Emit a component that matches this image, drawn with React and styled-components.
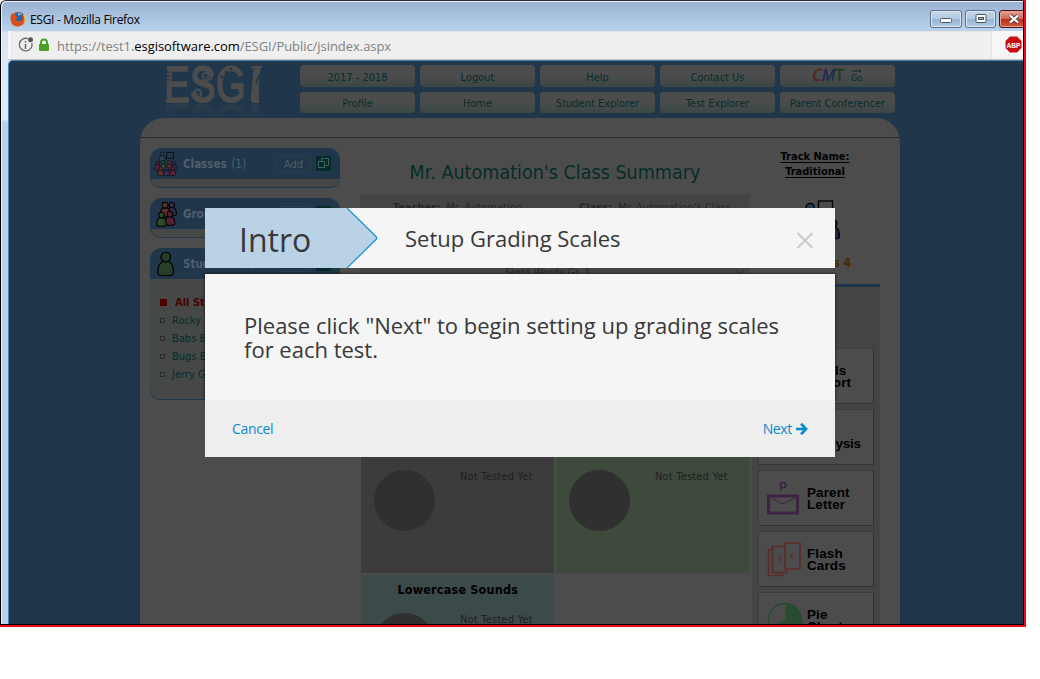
import React from "react";
import styled, { createGlobalStyle, css } from "styled-components";

const tahoma = `"DejaVu Sans Condensed", "DejaVu Sans", Tahoma, sans-serif`;
const openSans = `"Open Sans", "Noto Sans", sans-serif`;

const Global = createGlobalStyle`
  *, *::before, *::after { box-sizing: border-box; }
  html, body { margin: 0; background: #fff; }
  body { font-family: ${tahoma}; }
  svg { display: block; }
`;

const Screen = styled.div`
  width: 1026px;
  height: 627px;
  overflow: hidden;
  border-right: 2px solid #ee0a1e;
  border-bottom: 2px solid #ee0a1e;
`;
const Frame = styled.div`
  height: 625px;
  display: flex;
  flex-direction: column;
  border: 1px solid #000;
  border-top: 1px solid #2b2830;
  border-radius: 6px 0 0 0;
  background: linear-gradient(#98b2d1 0, #b9d1ea 30px, #d9e5f4 31px, #e2ecf8 118px, #b9d1ea 121px);
  box-shadow: inset 1px 1px 0 #e9f1fa;
  overflow: hidden;
`;
const TitleBar = styled.div`
  height: 30px;
  flex: none;
  display: flex;
  align-items: center;
  padding: 6px 0 0 9px;
  gap: 4px;
`;
const WindowTitle = styled.div`
  flex: 1;
  font: 12px/18px ${openSans};
  letter-spacing: -0.3px;
  padding-top: 2px;
  color: #000;
`;
const WindowButtons = styled.div`
  display: flex;
  gap: 3px;
  width: 93px;
  overflow: hidden;
  padding-bottom: 1px;
`;
const WindowButton = styled.div`
  width: ${(p) => p.$w}px;
  height: 18px;
  flex: none;
  display: flex;
  align-items: center;
  justify-content: center;
  padding-right: ${(p) => (p.$close ? 2 : 0)}px;
  border: 1px solid ${(p) => (p.$close ? "#4b1119" : "#5e7188")};
  border-radius: 3px;
  box-shadow: inset 0 0 0 1px ${(p) => (p.$close ? "#e9a294" : "#dce8f5")};
  background: ${(p) =>
    p.$close
      ? "linear-gradient(#e4a394, #cf6752 49%, #b8301d 50%, #cf5a3a)"
      : "linear-gradient(#c5d7ea, #b3c9e0 49%, #98b3d0 50%, #b3cbe3)"};
`;
const UrlBar = styled.div`
  height: 29px;
  flex: none;
  margin-left: 7px;
  display: flex;
  align-items: center;
  background: #f6f6f6;
  padding-left: 3px;
  border-bottom: 1px solid #c4c4c4;
`;
const UrlField = styled.div`
  width: 981px;
  height: 28px;
  display: flex;
  align-items: center;
  padding: 0 0 1px 6px;
  background: #efefef;
  border: solid #e3e3e3;
  border-width: 1px 1px 0;
`;
const Url = styled.div`
  font: 13px/20px ${openSans};
  color: #818181;
  margin: 1px 0 0 8px;
  letter-spacing: -0.05px;
  b { font-weight: 400; color: #000; }
`;
const Adblock = styled.div`
  padding: 0 0 2px 13px;
`;
const Viewport = styled.div`
  position: relative;
  flex: 1;
  min-height: 0;
  overflow: hidden;
  margin-left: 7px;
  border: solid #4483b4;
  border-width: 1px 0 0 1px;
  border-radius: 5px 0 0 0;
  background: #20364b;
  padding: 0 0 0 131px;
`;
const Banner = styled.header`
  height: 57px;
  width: 760px;
  display: flex;
  padding: 4px 0 0 20px;
`;
const LogoBox = styled.div`
  width: 140px;
  height: 53px;
  padding-left: 5px;
`;
const Nav = styled.nav`
  display: grid;
  grid-template-columns: repeat(5, 115px);
  grid-template-rows: 22px 21px;
  gap: 5px;
  align-content: start;
`;
const NavButton = styled.div`
  display: flex;
  align-items: center;
  justify-content: center;
  border-radius: 4px;
  background: linear-gradient(#4c4c4c 45%, #3b4745);
  color: #062d2b;
  font-size: 11px;
  padding-top: 2px;
  gap: 7px;
`;
const Cmt = styled.span`
  font: italic 500 16px/16px ${openSans};
  -webkit-text-stroke: 0.4px;
  margin-top: -4px;
  i { color: #5a1c22; }
  b { color: #1c2a4c; font-weight: 400; }
  u { color: #1e3c22; text-decoration: none; font-style: normal; }
`;
const Go = styled.span`
  display: flex;
  flex-direction: column;
  align-items: center;
  font-size: 9.5px;
  line-height: 9px;
  margin-top: -4px;
`;
const Sheet = styled.main`
  width: 760px;
  height: 640px;
  background: #4c4c4c;
  border-radius: 24px 24px 0 0;
`;
const SheetTop = styled.div`
  height: 20px;
  border-bottom: 1px solid #2c2d2e;
`;
const Columns = styled.div`
  display: flex;
  align-items: flex-start;
`;
const Sidebar = styled.aside`
  width: 200px;
  flex: none;
  margin: 10px 0 0 10px;
  display: flex;
  flex-direction: column;
  gap: 10px;
`;
const Group = styled.section`
  width: 190px;
  height: ${(p) => p.$h}px;
  border-radius: 12px 12px 10px 10px;
  background: #454847;
  border-bottom: 1px solid #20364b;
  box-shadow: inset 1px 0 0 #3d464d, inset -1px 0 0 #3d464d;
  overflow: hidden;
`;
const GroupHead = styled.div`
  height: 31px;
  background: #20364b;
  display: flex;
  align-items: center;
  padding: 0 9px 0 4px;
`;
const GroupName = styled.div`
  flex: 1;
  margin: 1px 0 0 5px;
  font-size: 11.5px;
  font-weight: 700;
  color: #505f6b;
  white-space: nowrap;
  span { font-weight: 400; margin-left: 1px; }
`;
const AddButton = styled.div`
  width: 35px;
  height: 16px;
  border: 1px solid #2b4149;
  border-radius: 3px;
  font-size: 11px;
  line-height: 16px;
  text-align: center;
  color: #4d5f68;
  margin-right: 5px;
`;
const Students = styled.ul`
  list-style: none;
  margin: 0;
  padding: 14px 0 0 10px;
`;
const Student = styled.li`
  height: 18px;
  display: flex;
  align-items: center;
  font-size: 11px;
  color: #062d2b;
  gap: 7px;
  &::before {
    content: "";
    width: 5px;
    height: 5px;
    border: 1px solid #292b2b;
  }
  ${(p) =>
    p.$all &&
    css`
      color: #4c0000;
      font-weight: 700;
      gap: 8px;
      &::before { width: 7px; height: 7px; background: #4c0000; border: 0; }
    `}
`;
const Center = styled.section`
  width: 402px;
  flex: none;
  padding-left: 10px;
`;
const Heading = styled.h1`
  margin: 0;
  width: 390px;
  height: 56px;
  padding-top: 22px;
  font-size: 19.5px;
  line-height: 26px;
  font-weight: 400;
  text-align: center;
  letter-spacing: 0.03px;
  color: #062c2a;
  white-space: nowrap;
`;
const Info = styled.div`
  width: 390px;
  background: #444;
  height: 238px;
  color: #272727;
  font-size: 11px;
`;
const InfoRow = styled.div`
  display: flex;
  padding: 6px 0 0 33px;
  height: 71px;
  white-space: nowrap;
  > span { width: 186px; flex: none; line-height: 15px; }
  b { margin-right: 3px; }
`;
const SelectRow = styled.div`
  display: flex;
  justify-content: space-between;
  line-height: 15px;
  padding: 0 4px 0 145px;
`;
const Tiles = styled.div`
  display: grid;
  grid-template-columns: 193px 193px;
  grid-auto-rows: 141px;
  gap: 2px;
  margin-left: 1px;
`;
const Tile = styled.div`
  background: ${(p) => p.$bg};
  padding: 7px 0 0 12.5px;
`;
const TileTitle = styled.div`
  height: 31px;
  font-size: 12.5px;
  letter-spacing: 0.2px;
  line-height: 16px;
  font-weight: 700;
  text-align: center;
  padding-right: 12px;
  color: #000;
`;
const TileBody = styled.div`
  display: flex;
  gap: 25.5px;
`;
const Disc = styled.div`
  width: 61px;
  height: 61px;
  border-radius: 50%;
  background: #303030;
`;
const Note = styled.div`
  font-size: 11px;
  line-height: 14px;
  letter-spacing: 0.2px;
  color: #202020;
`;
const Right = styled.section`
  width: 128px;
`;
const Track = styled.div`
  height: 62px;
  padding: 11px 0 0;
  width: 126px;
  text-align: center;
  font-size: 11px;
  line-height: 15px;
  font-weight: 700;
  text-decoration: underline;
  text-underline-offset: 2px;
  color: #000;
  white-space: pre-line;
`;
const Badge = styled.div`
  height: 87px;
  padding-left: 44px;
  border-bottom: 3px solid #20364b;
`;
const Count = styled.div`
  display: flex;
  justify-content: flex-end;
  font-size: 12px;
  line-height: 16px;
  font-weight: 700;
  color: #4c2800;
  width: 55px;
  white-space: nowrap;
`;
const Reports = styled.div`
  background: #444;
  padding: 61px 0 0 6px;
  height: 400px;
  display: flex;
  flex-direction: column;
  gap: 5px;
`;
const Report = styled.div`
  width: 116px;
  height: 56px;
  flex: none;
  display: flex;
  align-items: center;
  background: #4c4c4c;
  border: 1px solid #303136;
  border-top-color: #3b3b40;
  border-left-color: #3b3b40;
  padding-left: 8px;
  gap: 4px;
`;
const ReportName = styled.div`
  font: 700 13.5px/12px "Liberation Sans", Arial, sans-serif;
  letter-spacing: ${(p) => (p.$low ? -0.2 : 0.1)}px;
  color: #000;
  white-space: pre-line;
  padding-top: ${(p) => (p.$low ? 13 : 1)}px;
`;

const Dialog = styled.div`
  position: absolute;
  left: 196px;
  top: 147px;
  width: 630px;
  font-family: ${openSans};
  color: #383838;
`;
const DialogHead = styled.div`
  height: 60px;
  display: flex;
  background: #f5f5f5;
  margin-bottom: 6px;
`;
const Step = styled.div`
  display: grid;
  width: 200px;
  > * { grid-area: 1 / 1; }
`;
const StepName = styled.div`
  padding-left: 34px;
  font-size: 32px;
  line-height: 63px;
`;
const DialogTitle = styled.div`
  flex: 1;
  font-size: 22px;
  line-height: 61px;
`;
const Close = styled.div`
  padding: 24px 22px 0 0;
`;
const DialogBody = styled.div`
  height: 126px;
  background: #f5f5f5;
  padding: 39px 0 0 39px;
  font-size: 22px;
  line-height: 24px;
  white-space: pre-line;
  box-shadow: 0 0 2px 1px rgba(0, 0, 0, 0.4);
`;
const DialogFoot = styled.div`
  position: relative;
  height: 57px;
  background: #eee;
  display: flex;
  justify-content: space-between;
  align-items: center;
  padding: 0 27px;
`;
const LinkButton = styled.div`
  display: flex;
  align-items: center;
  gap: 4px;
  color: #0a8acb;
  font-size: 14px;
  line-height: 20px;
  letter-spacing: -0.35px;
`;

const Person = ({ x, y, s = 1, fill, stroke = "#000", w = 1.3 }) => (
  <g transform={`translate(${x} ${y}) scale(${s})`} fill={fill} stroke={stroke} strokeWidth={w / s}>
    <path d="M5.5 9 C1 11 0 15 .5 21 Q1 23 8 23 T15.500 21 C16 15 15 11 10.500 9Z" />
    <circle cx="8" cy="5" r="4.600" />
  </g>
);
const Tiny = (p) => <Person s={0.4} w={0.8} stroke="#120f1c" {...p} />;

const Logo = () => (
  <svg width="102" height="53" viewBox="0 0 102 53">
    <defs>
      <linearGradient id="fade" x1="0" y1="0" x2="0" y2="1">
        <stop offset="0" stopColor="#fff" stopOpacity=".28" />
        <stop offset="1" stopColor="#fff" stopOpacity="0.05" />
      </linearGradient>
      <mask id="fadeMask"><rect y="39" width="102" height="14" fill="url(#fade)" /></mask>
    </defs>
    <g id="mark" fill="#4c4c4c" stroke="#4c4c4c">
      <text x="-1 33 67 113" y="37" transform="scale(.76 1)" strokeWidth="1.800" fontFamily="Liberation Sans, sans-serif" fontSize="50">ESGI</text>
      <g fill="none" strokeWidth="2">
        <path d="M47 9c1 6-7 8-9 4s3-7 5-4-1 4-2 3" />
        <path d="M28 27c-1 7 7 8 8 3s-5-7-6-4 2 4 3 3" />
        <path d="M1 36.500l23-1M87 37h7" />
        <path d="M90 5l-3 31M94 3l-4 33" strokeWidth="3" />
        <path d="M86 2.500l11-.5" />
      </g>
      <g stroke="#20364b" strokeWidth="1.300">
        <path d="M0 7h5M0 11h5M0 15h5M94 10l-3 9" />
        <g fill="#20364b" stroke="none"><circle cx="61" cy="7" r="1.300" /><circle cx="56.500" cy="12" r="1.300" /><circle cx="66" cy="4" r="1.300" /></g>
      </g>
    </g>
    <g mask="url(#fadeMask)"><use href="#mark" transform="translate(0 77) scale(1 -1)" /></g>
  </svg>
);

const Expand = () => (
  <svg width="15" height="15" viewBox="0 0 15 15">
    <rect width="15" height="15" fill="#052b29" />
    <g fill="#052b29" stroke="#41615c"><rect x="5.500" y="2.500" width="7" height="7" /><rect x="2.500" y="5.500" width="6" height="6" /></g>
  </svg>
);

const ClassIcon = () => (
  <svg width="24" height="26" viewBox="0 0 24 26">
    <Tiny x={5} y={1} fill="#26435a" />
    <rect x="12.500" y="1.500" width="7" height="6" fill="none" stroke="#06101a" />
    <Tiny x={0.5} y={10} fill="#571f33" /><Tiny x={6} y={9.5} fill="#2c4b2c" />
    <Tiny x={12} y={9.5} fill="#5c3124" /><Tiny x={17} y={10} fill="#30304f" />
    <Tiny x={3.500} y={15.5} fill="#5c3124" /><Tiny x={9.500} y={15.5} fill="#30304f" /><Tiny x={15.5} y={15.5} fill="#571f33" />
  </svg>
);
const GroupIcon = () => (
  <svg width="24" height="26" viewBox="0 0 24 26">
    <Person x={13} y={1} s={0.6} w={1.1} fill="#302e4a" /><Person x={6} y={1} s={0.64} w={1.1} fill="#5c3124" />
    <Person x={11} y={10} s={0.62} w={1.1} fill="#571f33" /><Person x={2.500} y={11} s={0.62} w={1.1} fill="#2c4b2c" />
  </svg>
);
const StudentIcon = () => (
  <svg width="24" height="26" viewBox="0 0 24 26"><Person x={3.500} y={1} s={1.03} fill="#273f27" /></svg>
);

const EnvelopeIcon = () => (
  <svg width="36" height="36" viewBox="0 0 36 36" fill="none">
    <text x="12" y="11" fontFamily="Liberation Sans, sans-serif" fontWeight="700" fontSize="12" fill="#3c2342">P</text>
    <rect x="1.500" y="16" width="29" height="17" stroke="#3c2342" strokeWidth="3" />
    <path d="M4 18l12 6 12-6" stroke="#3c2342" />
  </svg>
);
const CardsIcon = () => (
  <svg width="36" height="36" viewBox="0 0 36 36" fill="#4c4c4c" stroke="#5c2b29" strokeWidth="1.600">
    <path d="M1.500 8.500h14v26h-14z" /><path d="M5.500 5.500h14v26h-14z" /><path d="M18 2h15v26H18z" />
    <g stroke="none" fill="#5c2b29" fontFamily="Liberation Serif, serif" fontWeight="700" fontSize="11"><text x="11" y="22">f</text><text x="23" y="18">c</text></g>
  </svg>
);
const PieIcon = () => (
  <svg width="36" height="36" viewBox="0 0 36 36">
    <circle cx="18" cy="18" r="16.500" fill="#4c4c4c" stroke="#294b30" strokeWidth="1.300" />
    <path d="M18.500 17.500V1.500A16.500 16.500 0 1 1 4 26Z" fill="#294b30" />
  </svg>
);

const reports = [
  { name: "Totals\nReport", icon: <svg width="36" height="36" /> },
  { name: "Analysis", icon: <svg width="36" height="36" />, low: true },
  { name: "Parent\nLetter", icon: <EnvelopeIcon /> },
  { name: "Flash\nCards", icon: <CardsIcon /> },
  { name: "Pie\nCharts", icon: <PieIcon /> },
];

const TestTile = ({ title, bg }) => (
  <Tile $bg={bg}>
    <TileTitle>{title}</TileTitle>
    <TileBody><Disc /><Note>Not Tested Yet</Note></TileBody>
  </Tile>
);

const SideGroup = ({ icon, name, count, h, children }) => (
  <Group $h={h}>
    <GroupHead>
      {icon}
      <GroupName>{name} <span>({count})</span></GroupName>
      <AddButton>Add</AddButton>
      <Expand />
    </GroupHead>
    {children}
  </Group>
);

export default function App() {
  return (
    <>
      <Global />
      <Screen>
        <Frame>
          <TitleBar>
            <svg width="16" height="16" viewBox="0 0 16 16">
              <circle cx="8" cy="8" r="7.300" fill="#e5601b" />
              <circle cx="8.500" cy="6.500" r="5.300" fill="#2b5fa8" />
              <path d="M8 1.500c2 0 4 1 4 2L8 5Z" fill="#56b5de" />
              <path d="M1 4c0-1 1-2 1-2l1 2c2-1 3 0 3 1l2 1-2 2c0 3 4 3 6 1 1-2 0-5-1-6 3 2 4 5 3 8-2 5-9 6-12 2C1 11 0 7 1 4Z" fill="#d9501b" />
              <path d="M13 4c2 3 2 6 0 9 3-3 3-6 2-9Z" fill="#f6c33b" />
            </svg>
            <WindowTitle>ESGI - Mozilla Firefox</WindowTitle>
            <WindowButtons>
              <WindowButton $w={32}>
                <svg width="12" height="8"><rect x=".5" y="3.500" width="11" height="4" rx="1" fill="#fff" stroke="#4d5665" /></svg>
              </WindowButton>
              <WindowButton $w={31}>
                <svg width="12" height="9"><rect x="1" y=".5" width="10" height="8" rx="1" fill="#fff" stroke="#4d5665" /><rect x="3.500" y="3.500" width="5" height="2" fill="#8fa8c4" stroke="#4d5665" /></svg>
              </WindowButton>
              <WindowButton $w={32} $close>
                <svg width="12" height="10" viewBox="0 0 12 10"><path d="M2 1.500l8 7M10 1.500l-8 7" stroke="#52434c" strokeWidth="4" /><path d="M2 1.500l8 7M10 1.500l-8 7" stroke="#fff" strokeWidth="2.200" /></svg>
              </WindowButton>
            </WindowButtons>
          </TitleBar>
          <UrlBar>
            <UrlField>
              <svg width="16" height="16" viewBox="0 0 16 16">
                <path d="M10 1.700A6.300 6.300 0 1 0 13.800 6" fill="none" stroke="#6c6c6c" strokeWidth="1.300" />
                <path d="M7.500 4v1.500M7.500 7v5" stroke="#6c6c6c" strokeWidth="1.600" />
                <circle cx="12.500" cy="2.800" r="2.500" fill="#555" />
              </svg>
              <svg width="15" height="14" viewBox="0 0 15 14">
                <rect x="5" y="6" width="10" height="7" rx="1" fill="#4a9e22" />
                <path d="M7 7V4.500a3 3 0 0 1 6 0V7" fill="none" stroke="#4a9e22" strokeWidth="1.900" />
              </svg>
              <Url>https://test1.<b>esgisoftware.com</b>/ESGI/Public/jsindex.aspx</Url>
            </UrlField>
            <Adblock>
              <svg width="17" height="17" viewBox="0 0 17 17">
                <path d="M5 .5h7l4.500 4.500v7L12 16.500H5L.5 12V5z" fill="#c70d13" />
                <text x="1.500" y="11.500" fontFamily="Liberation Sans, sans-serif" fontWeight="700" fontSize="8" textLength="14" lengthAdjust="spacingAndGlyphs" fill="#fff">ABP</text>
              </svg>
            </Adblock>
          </UrlBar>
          <Viewport>
            <Banner>
              <LogoBox><Logo /></LogoBox>
              <Nav>
                <NavButton>2017 - 2018</NavButton>
                <NavButton>Logout</NavButton>
                <NavButton>Help</NavButton>
                <NavButton>Contact Us</NavButton>
                <NavButton>
                  <Cmt><i>C</i><b>M</b><u>T</u></Cmt>
                  <Go>
                    <svg width="10" height="4" viewBox="0 0 10 4"><path d="M0 2h9M7.500 .5L9 2 7.500 3.500" fill="none" stroke="#062d2b" /></svg>
                    Go
                  </Go>
                </NavButton>
                <NavButton>Profile</NavButton>
                <NavButton>Home</NavButton>
                <NavButton>Student Explorer</NavButton>
                <NavButton>Test Explorer</NavButton>
                <NavButton>Parent Conferencer</NavButton>
              </Nav>
            </Banner>
            <Sheet>
              <SheetTop />
              <Columns>
                <Sidebar>
                  <SideGroup icon={<ClassIcon />} name="Classes" count={1} h={40} />
                  <SideGroup icon={<GroupIcon />} name="Groups" count={0} h={40} />
                  <SideGroup icon={<StudentIcon />} name="Students" count={4} h={152}>
                    <Students>
                      <Student $all>All Students</Student>
                      <Student>Rocky B</Student>
                      <Student>Babs B</Student>
                      <Student>Bugs B</Student>
                      <Student>Jerry G</Student>
                    </Students>
                  </SideGroup>
                </Sidebar>
                <Center>
                  <Heading>Mr. Automation's Class Summary</Heading>
                  <Info>
                    <InfoRow>
                      <span><b>Teacher:</b> Mr. Automation</span>
                      <span><b>Class:</b> Mr. Automation's Class</span>
                    </InfoRow>
                    <SelectRow>
                      <span>Sight Words Gr. 1</span>
                      <svg width="12" height="14"><path d="M2 5l4 4 4-4" fill="none" stroke="#333" /></svg>
                    </SelectRow>
                  </Info>
                  <Tiles>
                    <TestTile bg="#3c3c3c" />
                    <TestTile bg="#3d4a3c" />
                    <TestTile bg="#3c4a4a" title="Lowercase Sounds" />
                  </Tiles>
                </Center>
                <Right>
                  <Track>{"Track Name:\nTraditional"}</Track>
                  <Badge>
                    <svg width="50" height="55" viewBox="0 0 50 55">
                      <Person x={7} y={3} s={0.9} fill="#203c50" />
                      <rect x="22.500" y="1" width="14" height="12" fill="none" stroke="#000" strokeWidth="1.300" />
                      <Person x={30} y={19} s={0.86} fill="#252542" />
                      <Person x={22} y={34} s={0.9} fill="#571f33" />
                    </svg>
                    <Count>Students 4</Count>
                  </Badge>
                  <Reports>
                    {reports.map((r) => (
                      <Report key={r.name}>
                        {r.icon}
                        <ReportName $low={r.low}>{r.name}</ReportName>
                      </Report>
                    ))}
                  </Reports>
                </Right>
              </Columns>
            </Sheet>
            <Dialog>
              <DialogHead>
                <Step>
                  <svg width="174" height="60" viewBox="0 0 174 60">
                    <path d="M0 0H142L171 28.500Q172.500 30 171 31.500L142 60H0Z" fill="#bad2e5" />
                    <path d="M142 0L171 28.500Q172.500 30 171 31.500L142 60" fill="none" stroke="#1590d0" strokeWidth="1.200" />
                  </svg>
                  <StepName>Intro</StepName>
                </Step>
                <DialogTitle>Setup Grading Scales</DialogTitle>
                <Close>
                  <svg width="16" height="17" viewBox="0 0 16 17"><path d="M.5 1l15 15M15.500 1l-15 15" stroke="#c9cbcd" strokeWidth="2.200" /></svg>
                </Close>
              </DialogHead>
              <DialogBody>{'Please click "Next" to begin setting up grading scales\nfor each test.'}</DialogBody>
              <DialogFoot>
                <LinkButton>Cancel</LinkButton>
                <LinkButton>
                  Next
                  <svg width="12" height="12" viewBox="0 0 12 12" fill="none" stroke="#0a8acb" strokeWidth="2.700"><path d="M0 6h10M5 .8L10.200 6 5 11.200" /></svg>
                </LinkButton>
              </DialogFoot>
            </Dialog>
          </Viewport>
        </Frame>
      </Screen>
    </>
  );
}
